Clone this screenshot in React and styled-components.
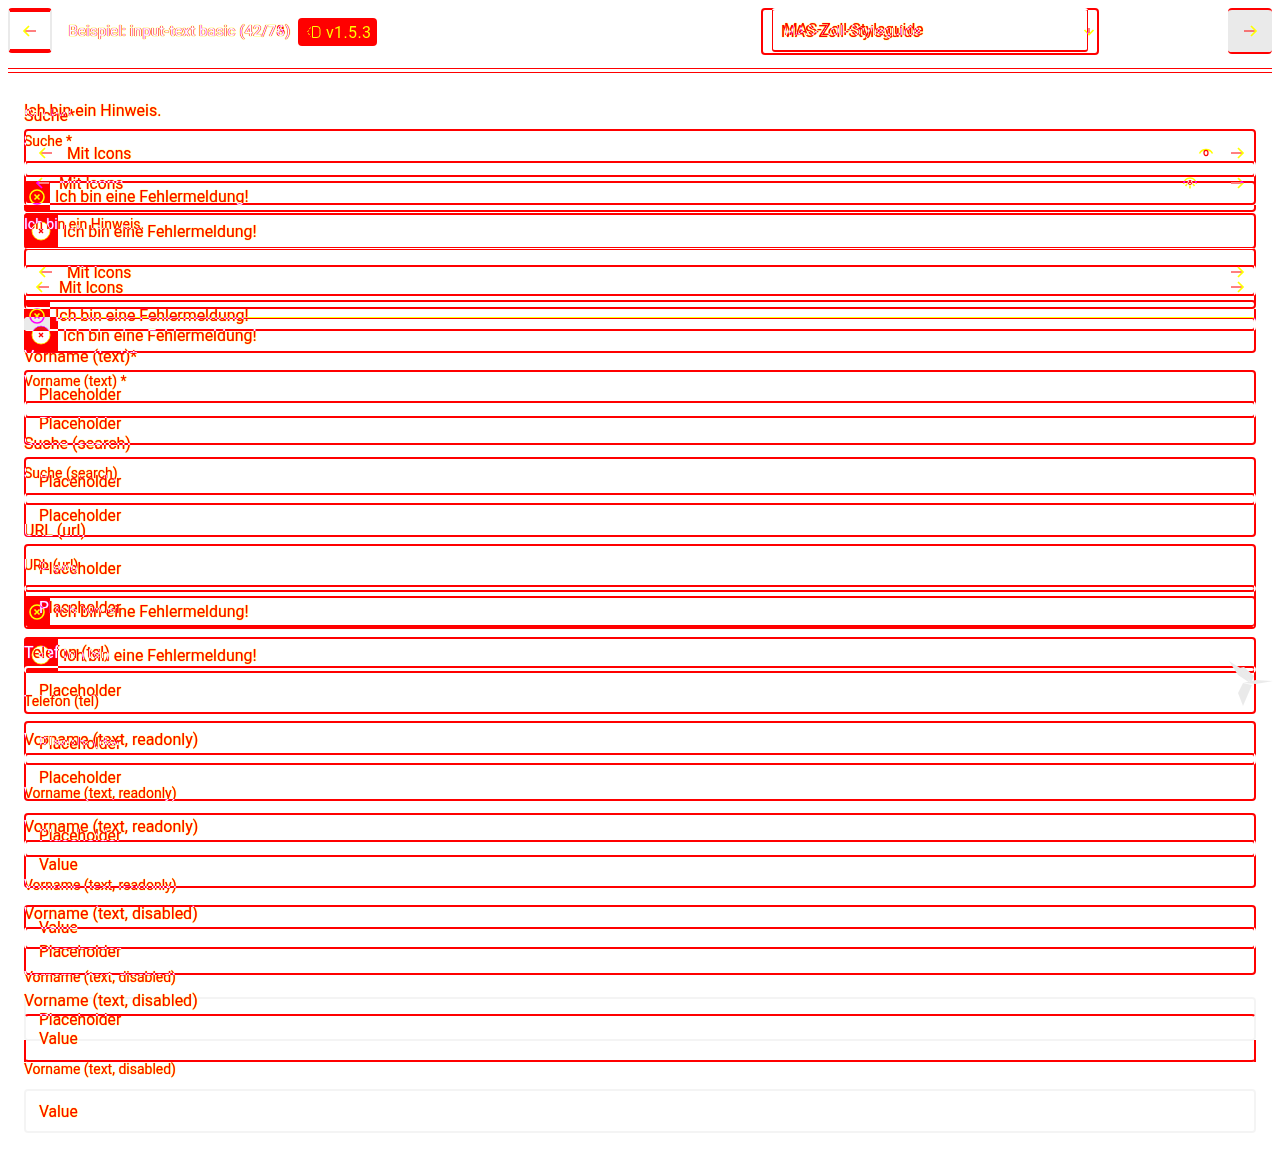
import React from "react";
import styled, { createGlobalStyle, css } from "styled-components";

// The whole stage is inverted, and the two layers are laid over each other in
// difference mode: cyan ends up red, blue ends up yellow, black ends up white.
const INK = "#00ffff";
const HALO = "#0000ff";
const FAINT = "#151515";
const FAINTER = "#0b0b0b";

const Global = createGlobalStyle`
  html, body {
    margin: 0;
    padding: 0;
    background: #fff;
    font-family: Roboto, "Liberation Sans", sans-serif;
  }
`;

const Stage = styled.div`
  position: relative;
  width: 1280px;
  height: 1157px;
  overflow: hidden;
  background: #000;
  filter: invert(1);
  isolation: isolate;
  color: ${INK};
  font-size: 16px;
  text-shadow: 0 0 1px ${HALO}, 0 0 1px ${HALO};
`;

const Layer = styled.div`
  width: 1280px;
  mix-blend-mode: difference;
  ${(p) =>
    p.$v === "s" &&
    css`
      position: absolute;
      top: 0;
      left: 0;
    `}
`;

const Header = styled.header`
  display: flex;
  align-items: flex-start;
  margin: 8px 8px 0;
  height: ${(p) => (p.$v === "l" ? 60 : 64)}px;
  border-bottom: 1px solid ${INK};
`;

const BackButton = styled.div`
  display: flex;
  align-items: center;
  justify-content: center;
  box-sizing: border-box;
  width: 44px;
  height: 45px;
  border-radius: 4px;
  border-style: solid;
  border-width: 4px 2px;
  border-color: ${INK} ${FAINT};
`;

const BackSpacer = styled.div`
  width: 44px;
`;

const Title = styled.div`
  margin-left: ${(p) => (p.$v === "l" ? 16 : 16.5)}px;
  line-height: 46px;
  font-size: 15.2px;
  font-weight: 500;
  white-space: nowrap;
`;

const Badge = styled.div`
  display: flex;
  align-items: center;
  gap: 4px;
  box-sizing: border-box;
  width: 79px;
  height: 28px;
  margin: 10px 0 0 8px;
  padding-left: 8px;
  border-radius: 4px;
  background: ${INK};
  color: ${HALO};
  text-shadow: none;
  letter-spacing: 0.4px;
`;

const SelectBox = styled.div`
  display: flex;
  align-items: center;
  justify-content: space-between;
  box-sizing: border-box;
  margin-left: auto;
  font-size: 15.6px;
  white-space: nowrap;
  ${(p) =>
    p.$v === "l"
      ? css`
          width: 338px;
          height: 47px;
          padding: 0 2px 0 18px;
          border: 2px solid ${INK};
          border-radius: 4px;
        `
      : css`
          width: 316px;
          height: 44px;
          margin-right: 184px;
          padding-left: 11px;
          border: 1px solid ${INK};
          border-width: 2px 1px;
          border-radius: 3px;
        `}
`;

const NextButton = styled.div`
  display: flex;
  align-items: center;
  justify-content: center;
  box-sizing: border-box;
  width: 44px;
  height: 46px;
  margin-left: 129px;
  border-radius: 4px;
  background: ${FAINT};
  border-top: 2px solid ${INK};
  border-bottom: 2px solid ${INK};
`;

const Main = styled.main`
  display: flex;
  flex-direction: column;
  gap: ${(p) => (p.$v === "l" ? 14 : 18)}px;
  margin: ${(p) => (p.$v === "l" ? 35 : 26)}px 24px 0;
`;

const Group = styled.div`
  display: flex;
  flex-direction: column;
  gap: ${(p) => (p.$v === "l" ? 14 : 16)}px;
`;

const Field = styled.div`
  display: flex;
  flex-direction: column;
`;

const Label = styled.label`
  white-space: nowrap;
  ${(p) =>
    p.$v === "l"
      ? css`
          font-size: 16px;
          line-height: 24px;
          margin-bottom: 1px;
        `
      : css`
          font-size: 14px;
          line-height: 20px;
          margin-bottom: 10px;
        `}
`;

const TopHint = styled.p`
  margin: 0 0 -10px;
  line-height: 24px;
`;

const FieldHint = styled.p`
  margin: 2px 0 0;
  font-size: 14px;
  line-height: 20px;
`;

const InputBox = styled.div`
  position: relative;
  display: flex;
  align-items: center;
  box-sizing: border-box;
  height: ${(p) => (p.$v === "l" ? 48 : 44)}px;
  padding: 0 13px;
  border: 2px solid ${(p) => (p.$faint ? FAINTER : INK)};
  border-radius: 4px;
  font-size: 15.6px;
  ${(p) =>
    p.$lowerSides &&
    css`
      border-left-color: transparent;
      border-right-color: transparent;
      &::after {
        content: "";
        position: absolute;
        top: 24px;
        bottom: -2px;
        left: -2px;
        right: -2px;
        border: solid ${INK};
        border-width: 0 2px;
      }
    `}
  ${(p) =>
    p.$icons &&
    (p.$v === "l"
      ? css`
          padding: 0 9px 0 12px;
          gap: 13px;
        `
      : css`
          padding: 0 9px;
          gap: 8px;
        `)}
`;

const InputText = styled.span`
  margin-top: 2px;
`;

const TrailingIcons = styled.div`
  display: flex;
  align-items: center;
  gap: ${(p) => (p.$v === "l" ? 15 : 31)}px;
  margin-left: auto;
`;

const ErrorRow = styled.div`
  position: relative;
  display: flex;
  align-items: center;
  box-sizing: border-box;
  height: ${(p) => (p.$v === "l" ? 31 : 36)}px;
  margin-top: ${(p) => (p.$v === "l" ? 4 : 8)}px;
  border: 2px solid ${INK};
  border-left: 0;
  border-radius: 4px;
  ${(p) =>
    p.$seam &&
    css`
      border-top-width: 1px;
      box-shadow: 0 -1px 0 ${HALO};
      margin-top: 9px;
      height: 35px;
    `}
  /* the row runs over the side of the input of the other layer: its colours
     differ there, so the side has to stay visible */
  ${(p) =>
    p.$cut &&
    css`
      &::after {
        content: "";
        position: absolute;
        top: -2px;
        right: -2px;
        width: 2px;
        height: ${p.$cut}px;
        background: #000;
      }
    `}
`;

const ErrorCell = styled.div`
  position: relative;
  display: flex;
  align-items: center;
  justify-content: center;
  align-self: stretch;
  width: ${(p) => (p.$v === "l" ? 26 : 34)}px;
  margin: -2px 0;
  border-radius: 4px 0 0 4px;
  background: ${INK};
  ${(p) =>
    p.$overlap &&
    css`
      &::before {
        content: "";
        position: absolute;
        left: 0;
        right: 0;
        bottom: 1px;
        height: 13px;
        background: #15eaea;
      }
    `}
  ${(p) =>
    p.$cut &&
    css`
      &::after {
        content: "";
        position: absolute;
        top: 0;
        left: 0;
        width: 2px;
        height: ${p.$cut}px;
        background: #000;
      }
    `}
  svg {
    position: relative;
  }
`;

const ErrorText = styled.span`
  margin-left: 5px;
  font-size: 15.9px;
`;

const Bird = styled.svg`
  position: absolute;
  left: 1225px;
  top: 658px;
`;

function Arrow({ dir = "right" }) {
  const flip = dir === "left";
  return (
    <svg
      width="16"
      height="16"
      viewBox="0 0 16 16"
      fill="none"
      style={flip ? { transform: "scaleX(-1)" } : undefined}
    >
      <path d="M2 8h11.5" stroke={INK} />
      <path d="M9 3l5 5-5 5" stroke={HALO} strokeWidth="1.7" />
    </svg>
  );
}

function TagIcon() {
  return (
    <svg width="16" height="14" viewBox="0 0 16 14" fill="none" stroke={HALO}>
      <path d="M6.5 1.5H11a3 3 0 0 1 3 3v5a3 3 0 0 1-3 3H6.5z" />
      <path d="M4.5 2.5L1.5 7l3 4.5" strokeDasharray="2 1.5" />
    </svg>
  );
}

function Chevron() {
  return (
    <svg width="12" height="10" viewBox="0 0 12 10" fill="none">
      <path d="M1.5 3l4.5 4.5L10.5 3" stroke={HALO} strokeWidth="1.7" />
      <path d="M6 1v5" stroke={INK} />
    </svg>
  );
}

function EyeIcon({ v }) {
  if (v === "l") {
    return (
      <svg width="16" height="16" viewBox="0 0 16 16" fill="none">
        <path d="M1.5 8.5C3 5.5 5.5 4.5 8 4.5s5 1 6.5 4" stroke={HALO} strokeWidth="1.6" />
        <ellipse cx="8" cy="8" rx="2" ry="2.6" stroke={INK} strokeWidth="1.2" />
      </svg>
    );
  }
  return (
    <svg width="16" height="16" viewBox="0 0 16 16" fill="none">
      <path d="M1.5 9C2.5 4.5 5.5 3 8 3s5.5 1.5 6.5 6" stroke={HALO} strokeWidth="1.6" />
      <path d="M3.5 11l1.5-2M12.5 11L11 9M8 13.5v-3" stroke={HALO} strokeWidth="1.6" />
      <circle cx="8" cy="7.5" r="2" stroke={INK} />
    </svg>
  );
}

function ErrorIcon({ v }) {
  if (v === "l") {
    return (
      <svg width="18" height="18" viewBox="0 0 18 18" fill="none" stroke={HALO} strokeWidth="1.6">
        <circle cx="9" cy="9" r="7" />
        <path d="M6.5 6.5l5 5M11.5 6.5l-5 5" />
      </svg>
    );
  }
  return (
    <svg width="20" height="20" viewBox="0 0 20 20" fill="none">
      <circle cx="10" cy="10" r="9" fill="#000" stroke={HALO} strokeWidth="0.8" />
      <path d="M8 8l4 4M12 8l-4 4" stroke={INK} strokeWidth="1.4" />
    </svg>
  );
}

function Input({ v, label, value, faint, lowerSides }) {
  return (
    <Field>
      <Label $v={v}>{label}</Label>
      <InputBox $v={v} $faint={faint} $lowerSides={lowerSides}>
        <InputText>{value}</InputText>
      </InputBox>
    </Field>
  );
}

function ErrorMessage({ v, seam, overlap, cut }) {
  return (
    <ErrorRow $v={v} $seam={seam} $cut={cut}>
      <ErrorCell $v={v} $overlap={overlap} $cut={cut}>
        <ErrorIcon v={v} />
      </ErrorCell>
      <ErrorText>Ich bin eine Fehlermeldung!</ErrorText>
    </ErrorRow>
  );
}

function SearchRow({ v, eye }) {
  return (
    <InputBox $v={v} $icons>
      <Arrow dir="left" />
      <InputText>Mit Icons</InputText>
      <TrailingIcons $v={v}>
        {eye && <EyeIcon v={v} />}
        <Arrow />
      </TrailingIcons>
    </InputBox>
  );
}

function Page({ v }) {
  const large = v === "l";
  const star = large ? "*" : " *";
  return (
    <Layer $v={v}>
      <Header $v={v}>
        {large ? (
          <BackButton>
            <Arrow dir="left" />
          </BackButton>
        ) : (
          <BackSpacer />
        )}
        <Title $v={v}>Beispiel: input-text basic (42/{large ? "78" : "76"})</Title>
        {large && (
          <Badge>
            <TagIcon />
            v1.5.3
          </Badge>
        )}
        <SelectBox $v={v}>
          MAS-Zoll-Styleguide
          {large && <Chevron />}
        </SelectBox>
        {large && (
          <NextButton>
            <Arrow />
          </NextButton>
        )}
      </Header>
      <Main $v={v}>
        {!large && <TopHint>Ich bin ein Hinweis.</TopHint>}
        <Group $v={v}>
          <Field>
            <Label $v={v}>Suche{star}</Label>
            <SearchRow v={v} eye />
            <ErrorMessage v={v} cut={large ? 24 : undefined} />
            {large && <FieldHint>Ich bin ein Hinweis.</FieldHint>}
          </Field>
          <Field>
            <SearchRow v={v} />
            <ErrorMessage v={v} seam={!large} overlap={large} cut={large ? 9 : undefined} />
          </Field>
        </Group>
        <Input v={v} label={`Vorname (text)${star}`} value="Placeholder" />
        <Input v={v} label="Suche (search)" value="Placeholder" />
        <Field>
          <Input v={v} label="URL (url)" value="Placeholder" />
          <ErrorMessage v={v} cut={large ? 31 : undefined} />
        </Field>
        <Input v={v} label="Telefon (tel)" value="Placeholder" />
        <Input v={v} label="Vorname (text, readonly)" value="Placeholder" />
        <Input v={v} label="Vorname (text, readonly)" value="Value" />
        <Input v={v} label="Vorname (text, disabled)" value="Placeholder" faint={!large} />
        <Input v={v} label="Vorname (text, disabled)" value="Value" faint={!large} lowerSides={large} />
      </Main>
    </Layer>
  );
}

export default function App() {
  return (
    <>
      <Global />
      <Stage>
        <Page v="l" />
        <Page v="s" />
        <Bird width="50" height="50" viewBox="0 0 50 50" fill={FAINT}>
          <path d="M4 3l16 10 5 12-12-8z" />
          <path d="M14 10l5-1 10 9-3 7z" />
          <path d="M18 25l13-3 17 1-17 3z" />
          <path d="M18 25l9 2-9 21-5-13z" />
        </Bird>
      </Stage>
    </>
  );
}
